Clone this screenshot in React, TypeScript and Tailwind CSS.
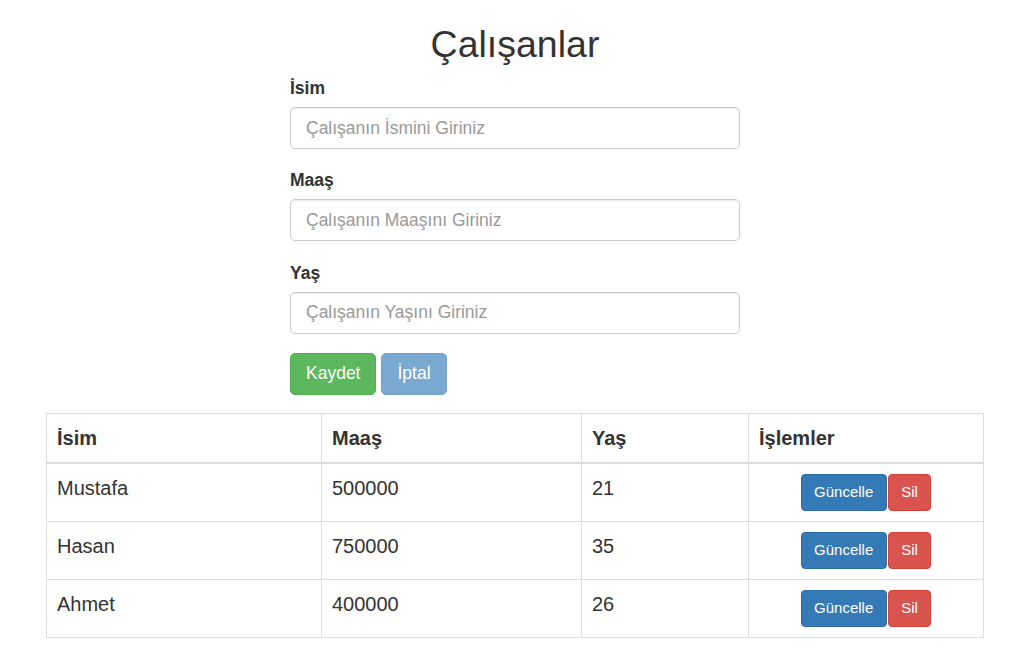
import React from "react";

type Calisan = { isim: string; maas: number; yas: number };

const calisanlar: Calisan[] = [
  { isim: "Mustafa", maas: 500000, yas: 21 },
  { isim: "Hasan", maas: 750000, yas: 35 },
  { isim: "Ahmet", maas: 400000, yas: 26 },
];

function Alan({ etiket, placeholder }: { etiket: string; placeholder: string }) {
  return (
    <div className="mb-[19.25px]">
      <label className="block font-bold leading-[25px] mb-[6px]">{etiket}</label>
      <input
        placeholder={placeholder}
        className="block w-full h-[42px] px-[15px] py-[7.5px] text-[17.5px] leading-[25px] border border-[#ccc] rounded-[5px] shadow-[inset_0_1px_1px_rgba(0,0,0,0.075)] placeholder:text-[#999] outline-none"
      />
    </div>
  );
}

export default function App() {
  return (
    <div className="w-[1030px] min-h-[653px] bg-white text-[#333] text-[17.5px] leading-[25px] font-['Liberation_Sans',Arial,sans-serif]">
      <h2 className="text-center text-[37.5px] leading-[41px] font-normal mt-[24px] mb-[11px]">Çalışanlar</h2>

      <div className="w-[450px] mx-auto">
        <Alan etiket="İsim" placeholder="Çalışanın İsmini Giriniz" />
        <Alan etiket="Maaş" placeholder="Çalışanın Maaşını Giriniz" />
        <Alan etiket="Yaş" placeholder="Çalışanın Yaşını Giriniz" />
        <div className="flex gap-[5px] mb-[18px]">
          <button className="h-[42px] px-[15px] text-white bg-[#5cb85c] border border-[#4cae4c] rounded-[5px]">Kaydet</button>
          <button disabled className="h-[42px] px-[15px] text-white bg-[#337ab7] border border-[#2e6da4] rounded-[5px] opacity-65">İptal</button>
        </div>
      </div>

      <div className="w-[938px] mx-auto">
        <table className="w-full border-collapse border border-[#ddd] text-[20px] leading-[28px]">
          <thead>
            <tr className="text-left">
              <th className="w-[275px] p-[10px] border border-[#ddd] border-b-2 align-bottom">İsim</th>
              <th className="w-[260px] p-[10px] border border-[#ddd] border-b-2 align-bottom">Maaş</th>
              <th className="w-[167px] p-[10px] border border-[#ddd] border-b-2 align-bottom">Yaş</th>
              <th className="p-[10px] border border-[#ddd] border-b-2 align-bottom">İşlemler</th>
            </tr>
          </thead>
          <tbody>
            {calisanlar.map(c => (
              <tr key={c.isim}>
                <td className="p-[10px] border border-[#ddd] align-top">{c.isim}</td>
                <td className="p-[10px] border border-[#ddd] align-top">{c.maas}</td>
                <td className="p-[10px] border border-[#ddd] align-top">{c.yas}</td>
                <td className="p-[10px] border border-[#ddd] align-top">
                  <div className="flex justify-center gap-px">
                    <button className="h-[37px] px-[12.5px] text-[15px] leading-[22px] text-white bg-[#337ab7] border border-[#2e6da4] rounded-[4px]">Güncelle</button>
                    <button className="h-[37px] px-[12.5px] text-[15px] leading-[22px] text-white bg-[#d9534f] border border-[#d43f3a] rounded-[4px]">Sil</button>
                  </div>
                </td>
              </tr>
            ))}
          </tbody>
        </table>
      </div>
    </div>
  );
}
